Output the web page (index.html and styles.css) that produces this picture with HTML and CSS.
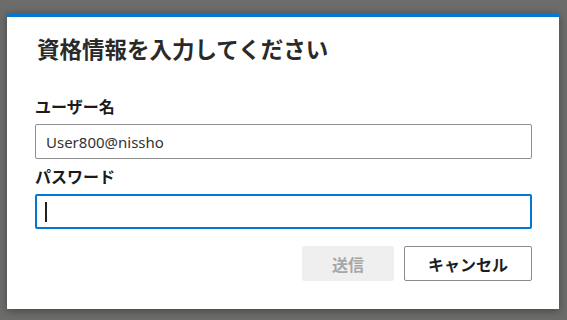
FILE: index.html
```html
<!DOCTYPE html>
<html lang="ja">
<head>
    <meta charset="UTF-8">
    <meta name="viewport" content="width=device-width, initial-scale=1.0">
    <title>資格情報</title>
    <link rel="stylesheet" href="styles.css">
</head>
<body>

    <div class="dialog">
        <h1 class="title">資格情報を入力してください</h1>

        <label class="label" for="user">ユーザー名</label>
        <input type="text" id="user" class="field" value="User800@nissho">

        <label class="label label-pass">パスワード</label>
        <div class="field field-focus"><span class="caret"></span></div>

        <div class="buttons">
            <button class="btn btn-send" disabled>送信</button>
            <button class="btn btn-cancel">キャンセル</button>
        </div>
    </div>

</body>
</html>
```

FILE: styles.css
```css
* {
    box-sizing: border-box;
    margin: 0;
    padding: 0;
    font-family: "Noto Sans", "Noto Sans CJK JP", sans-serif;
}

body {
    background: #6c6c6a;
    height: 320px;
    padding: 13px 8px 11px 7px;
}

.dialog {
    background: #fff;
    border-top: 4px solid #0078d4;
    box-shadow: 0 2px 8px rgba(0, 0, 0, 0.35);
    width: 552px;
    height: 296px;
    padding: 18px 27px 0 28px;
    display: flex;
    flex-direction: column;
}

.title {
    font-size: 22.5px;
    line-height: 30px;
    font-weight: 700;
    color: #2a2a2a;
    padding-left: 2px;
    margin-bottom: 31px;
}

.label {
    font-size: 16px;
    line-height: 22px;
    font-weight: 700;
    color: #1b1b1b;
}

.label-pass {
    margin-top: 7px;
}

.field {
    display: block;
    width: 497px;
    height: 35px;
    margin-top: 6px;
    border: 1px solid #8f8f8f;
    border-radius: 2px;
    padding: 0 10px;
    font-size: 15px;
    color: #333;
    background: #fff;
    outline: none;
}

.field-focus {
    border: 2px solid #0078d4;
    display: flex;
    align-items: center;
    padding-left: 8px;
}

.caret {
    width: 2px;
    height: 20px;
    background: #222;
}

.buttons {
    display: flex;
    justify-content: flex-end;
    gap: 10px;
    margin-top: 17px;
}

.btn {
    height: 35px;
    font-size: 16px;
    font-weight: 700;
    border-radius: 2px;
    font-family: "Noto Sans CJK JP", sans-serif;
}

.btn-send {
    width: 92px;
    background: #efefef;
    border: 1px solid #efefef;
    color: #a6a6a6;
}

.btn-cancel {
    width: 128px;
    background: #fff;
    border: 1px solid #8a8a8a;
    color: #1e1e1e;
}
```
